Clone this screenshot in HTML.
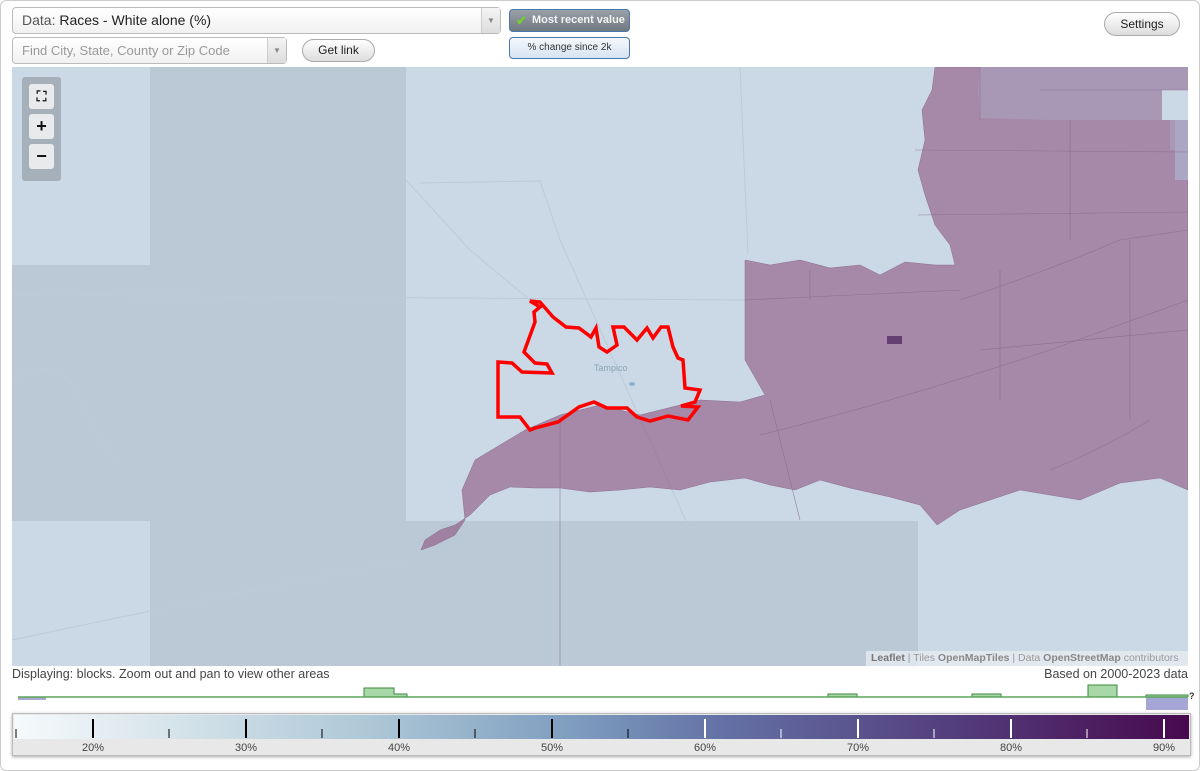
<!DOCTYPE html>
<html><head><meta charset="utf-8"><style>
*{box-sizing:border-box;margin:0;padding:0}
body{width:1200px;height:771px;background:#fff;font-family:"Liberation Sans",sans-serif;position:relative;overflow:hidden}
.frame{position:absolute;left:0;top:0;width:1200px;height:771px;border:1px solid #ccc;border-radius:6px}
.sel{position:absolute;border:1px solid #bbb;border-radius:4px;background:linear-gradient(#fff,#f1f1f1);font-size:14px;color:#555}
.sel .arr{position:absolute;right:0;top:0;bottom:0;width:19px;border-left:1px solid #ccc;background:linear-gradient(#f4f4f4,#ddd);color:#888;font-size:8px;text-align:center}
.pill{position:absolute;border:1px solid #aaa;border-radius:12px;background:linear-gradient(#fff,#ddd);font-size:12px;color:#222;text-align:center}
.map{position:absolute;left:12px;top:67px;width:1176px;height:599px;overflow:hidden;background:#cad9e5}
.zc{position:absolute;left:22px;top:77px;width:39px;height:104px;background:#a6b0ba;border-radius:3px}
.zb{position:absolute;left:7px;width:25px;height:25px;background:#e8eaec;border-radius:3px;font-weight:bold;text-align:center;font-size:18px;line-height:24px;color:#111}
</style></head><body>
<div class="frame"></div>
<div class="sel" style="left:12px;top:7px;width:489px;height:27px;line-height:25px;padding-left:9px">Data: <span style="color:#222">Races - White alone (%)</span><div class="arr" style="line-height:25px">▼</div></div>
<div class="sel" style="left:12px;top:37px;width:275px;height:27px;line-height:25px;padding-left:9px;color:#999;font-size:13px">Find City, State, County or Zip Code<div class="arr" style="line-height:25px">▼</div></div>
<div class="pill" style="left:302px;top:39px;width:73px;height:23px;line-height:21px">Get link</div>
<div style="position:absolute;left:509px;top:9px;width:121px;height:23px;border:1px solid #4a78b0;border-radius:4px;background:linear-gradient(#9aa0a8,#707880);color:#f4f4f4;font-size:11px;font-weight:bold;line-height:21px;padding-left:22px"><span style="position:absolute;left:6px;top:0;color:#7c3;font-size:13px">✔</span>Most recent value</div>
<div style="position:absolute;left:509px;top:37px;width:121px;height:22px;border:1px solid #4a78b0;border-radius:4px;background:linear-gradient(#f4f8fc,#d6e4f2);color:#333;font-size:10px;line-height:20px;text-align:center">% change since 2k</div>
<div class="pill" style="left:1104px;top:12px;width:76px;height:24px;line-height:22px">Settings</div>

<div class="map">
<svg width="1176" height="599" viewBox="12 67 1176 599" style="position:absolute;left:0;top:0">
<rect x="150" y="67" width="256" height="599" fill="#bac9d5"/>
<rect x="12" y="265" width="138" height="256" fill="#bac9d5"/>
<rect x="406" y="521" width="512" height="145" fill="#bac9d5"/>
<g stroke="#bccbd8" fill="none" stroke-width="1">
<path d="M12 295 L745 300"/><path d="M420 183 L540 181 L560 240 L690 530"/><path d="M12 380 Q60 350 80 400 T120 460"/><path d="M406 180 L470 250 L530 300"/><path d="M740 67 L748 255"/><path d="M12 640 Q200 600 406 560"/>
</g>
<polygon fill="#8e527f" fill-opacity="0.6" stroke="#8e6e90" stroke-width="0.5" points="935,67 1188,67 1188,490 1160,478 1120,483 1080,500 1050,495 1020,490 990,500 960,510 937,525 920,505 890,497 850,488 820,480 795,490 770,485 745,478 710,482 680,490 650,487 620,490 590,492 560,488 535,488 510,487 490,495 470,515 455,525 440,530 425,540 421,550 435,545 455,535 465,520 462,490 475,460 500,445 525,430 560,415 600,405 640,415 680,405 700,400 740,402 765,395 745,360 745,260 770,265 800,260 830,268 860,265 880,275 905,262 935,265 955,265 950,245 935,225 925,195 918,170 925,140 922,110 932,90"/>
<polygon fill="#a898b6" points="980,67 1188,67 1188,150 1170,150 1170,120 1050,120 980,118 978,90"/>
<rect x="1162" y="90" width="26" height="30" fill="#cad9e5"/>
<rect x="1175" y="120" width="13" height="60" fill="#aba6c4"/>
<g stroke="#8a6a8c" stroke-width="0.6" fill="none" opacity="0.8">
<path d="M915 150 L1188 152"/><path d="M918 215 L1188 212"/><path d="M960 300 Q1050 270 1120 240 L1188 230"/><path d="M980 350 L1188 330"/><path d="M760 435 Q900 400 1050 350 L1188 300"/><path d="M770 400 L800 520"/><path d="M745 300 L960 290"/><path d="M1070 120 L1070 240"/><path d="M980 67 L980 120"/><path d="M1040 90 L1188 90"/><path d="M560 420 L560 666"/><path d="M1000 270 L1000 400"/><path d="M1130 240 L1130 420"/><path d="M810 270 L810 300"/><path d="M1150 420 Q1100 450 1050 470"/>
</g>
<rect x="887" y="336" width="15" height="8" fill="#653f72"/>
<polygon fill="none" stroke="#ff0000" stroke-width="3.5" stroke-linejoin="miter" points="530,301 540,302 553,317 566,327 579,328 591,337 596,328 599,347 607,352 617,345 613,327 624,327 637,340 647,328 653,338 661,327 668,327 673,347 678,358 683,360 685,388 700,390 695,402 681,406 698,407 688,420 668,416 650,421 637,417 627,408 607,408 594,402 579,407 558,422 535,428 530,430 520,417 498,417 498,362 512,363 522,372 552,373 547,364 535,363 524,352 535,322 534,312 540,307"/>
<text x="594" y="371" font-size="9" fill="#8ea2b4" font-family="Liberation Sans">Tampico</text>
<ellipse cx="632" cy="384" rx="3" ry="2" fill="#8fb0d0"/>
</svg>
<div style="position:absolute;right:0;bottom:0;height:15px;width:322px;background:rgba(230,235,240,.8);font-size:10.5px;color:#999;line-height:15px;padding-left:5px"><b style="color:#777">Leaflet</b> | Tiles <b style="color:#888">OpenMapTiles</b> | Data <b style="color:#888">OpenStreetMap</b> contributors</div>
</div>
<div class="zc"><div class="zb" style="top:7px;font-size:14px">⛶</div><div class="zb" style="top:37px">+</div><div class="zb" style="top:67px">−</div></div>

<div style="position:absolute;left:12px;top:667px;font-size:12.5px;color:#444">Displaying: blocks. Zoom out and pan to view other areas</div>
<div style="position:absolute;right:12px;top:667px;font-size:12.5px;color:#444">Based on 2000-2023 data</div>
<svg width="1200" height="30" style="position:absolute;left:0;top:684px">
<rect x="18" y="13" width="28" height="3" fill="#a8a8d0"/>
<rect x="1146" y="13" width="42" height="13" fill="#a6a6d6"/>
<g fill="#a8d8a8" stroke="#3a8a3a" stroke-width="1">
<path d="M364 13 V4 H394 V10 H407 V13"/><path d="M828 13 V10 H857 V13"/><path d="M972 13 V10 H1001 V13"/><path d="M1088 13 V1 H1117 V13"/><path d="M1146 13 V11 H1188 V13"/>
</g>
<path d="M18 13 H1188" stroke="#5aa55a" stroke-width="1.5"/>
<text x="1189" y="15" font-size="9" font-weight="bold" fill="#333">?</text>
</svg>
<div style="position:absolute;left:12px;top:713px;width:1179px;height:43px;border:1px solid #bbb;box-shadow:0 1px 3px #aaa;background:#e8e8e8">
<svg width="1177" height="41" style="position:absolute;left:0;top:0">
<defs><linearGradient id="g"><stop offset="0" stop-color="#f6fafb"/><stop offset="0.3" stop-color="#aec8d7"/><stop offset="0.47" stop-color="#7f9fc0"/><stop offset="0.6" stop-color="#6472a6"/><stop offset="0.8" stop-color="#533d7d"/><stop offset="1" stop-color="#48094e"/></linearGradient></defs>
<rect x="1" y="1" width="1175" height="24" fill="url(#g)"/>
<g stroke="#000" stroke-width="2"><path d="M80 5V24M233 5V24M386 5V24M539 5V24"/></g>
<g stroke="#000" stroke-width="1"><path d="M3 15V24M156 15V24M309 15V24M462 15V24M615 15V24"/></g>
<g stroke="#fff" stroke-width="2"><path d="M692 5V24M845 5V24M998 5V24M1151 5V24"/></g>
<g stroke="#fff" stroke-width="1"><path d="M768 15V24M921 15V24M1074 15V24"/></g>
<g font-size="11" fill="#444" text-anchor="middle" font-family="Liberation Sans"><text x="80" y="37">20%</text><text x="233" y="37">30%</text><text x="386" y="37">40%</text><text x="539" y="37">50%</text><text x="692" y="37">60%</text><text x="845" y="37">70%</text><text x="998" y="37">80%</text><text x="1151" y="37">90%</text></g>
</svg></div>
</body></html>
